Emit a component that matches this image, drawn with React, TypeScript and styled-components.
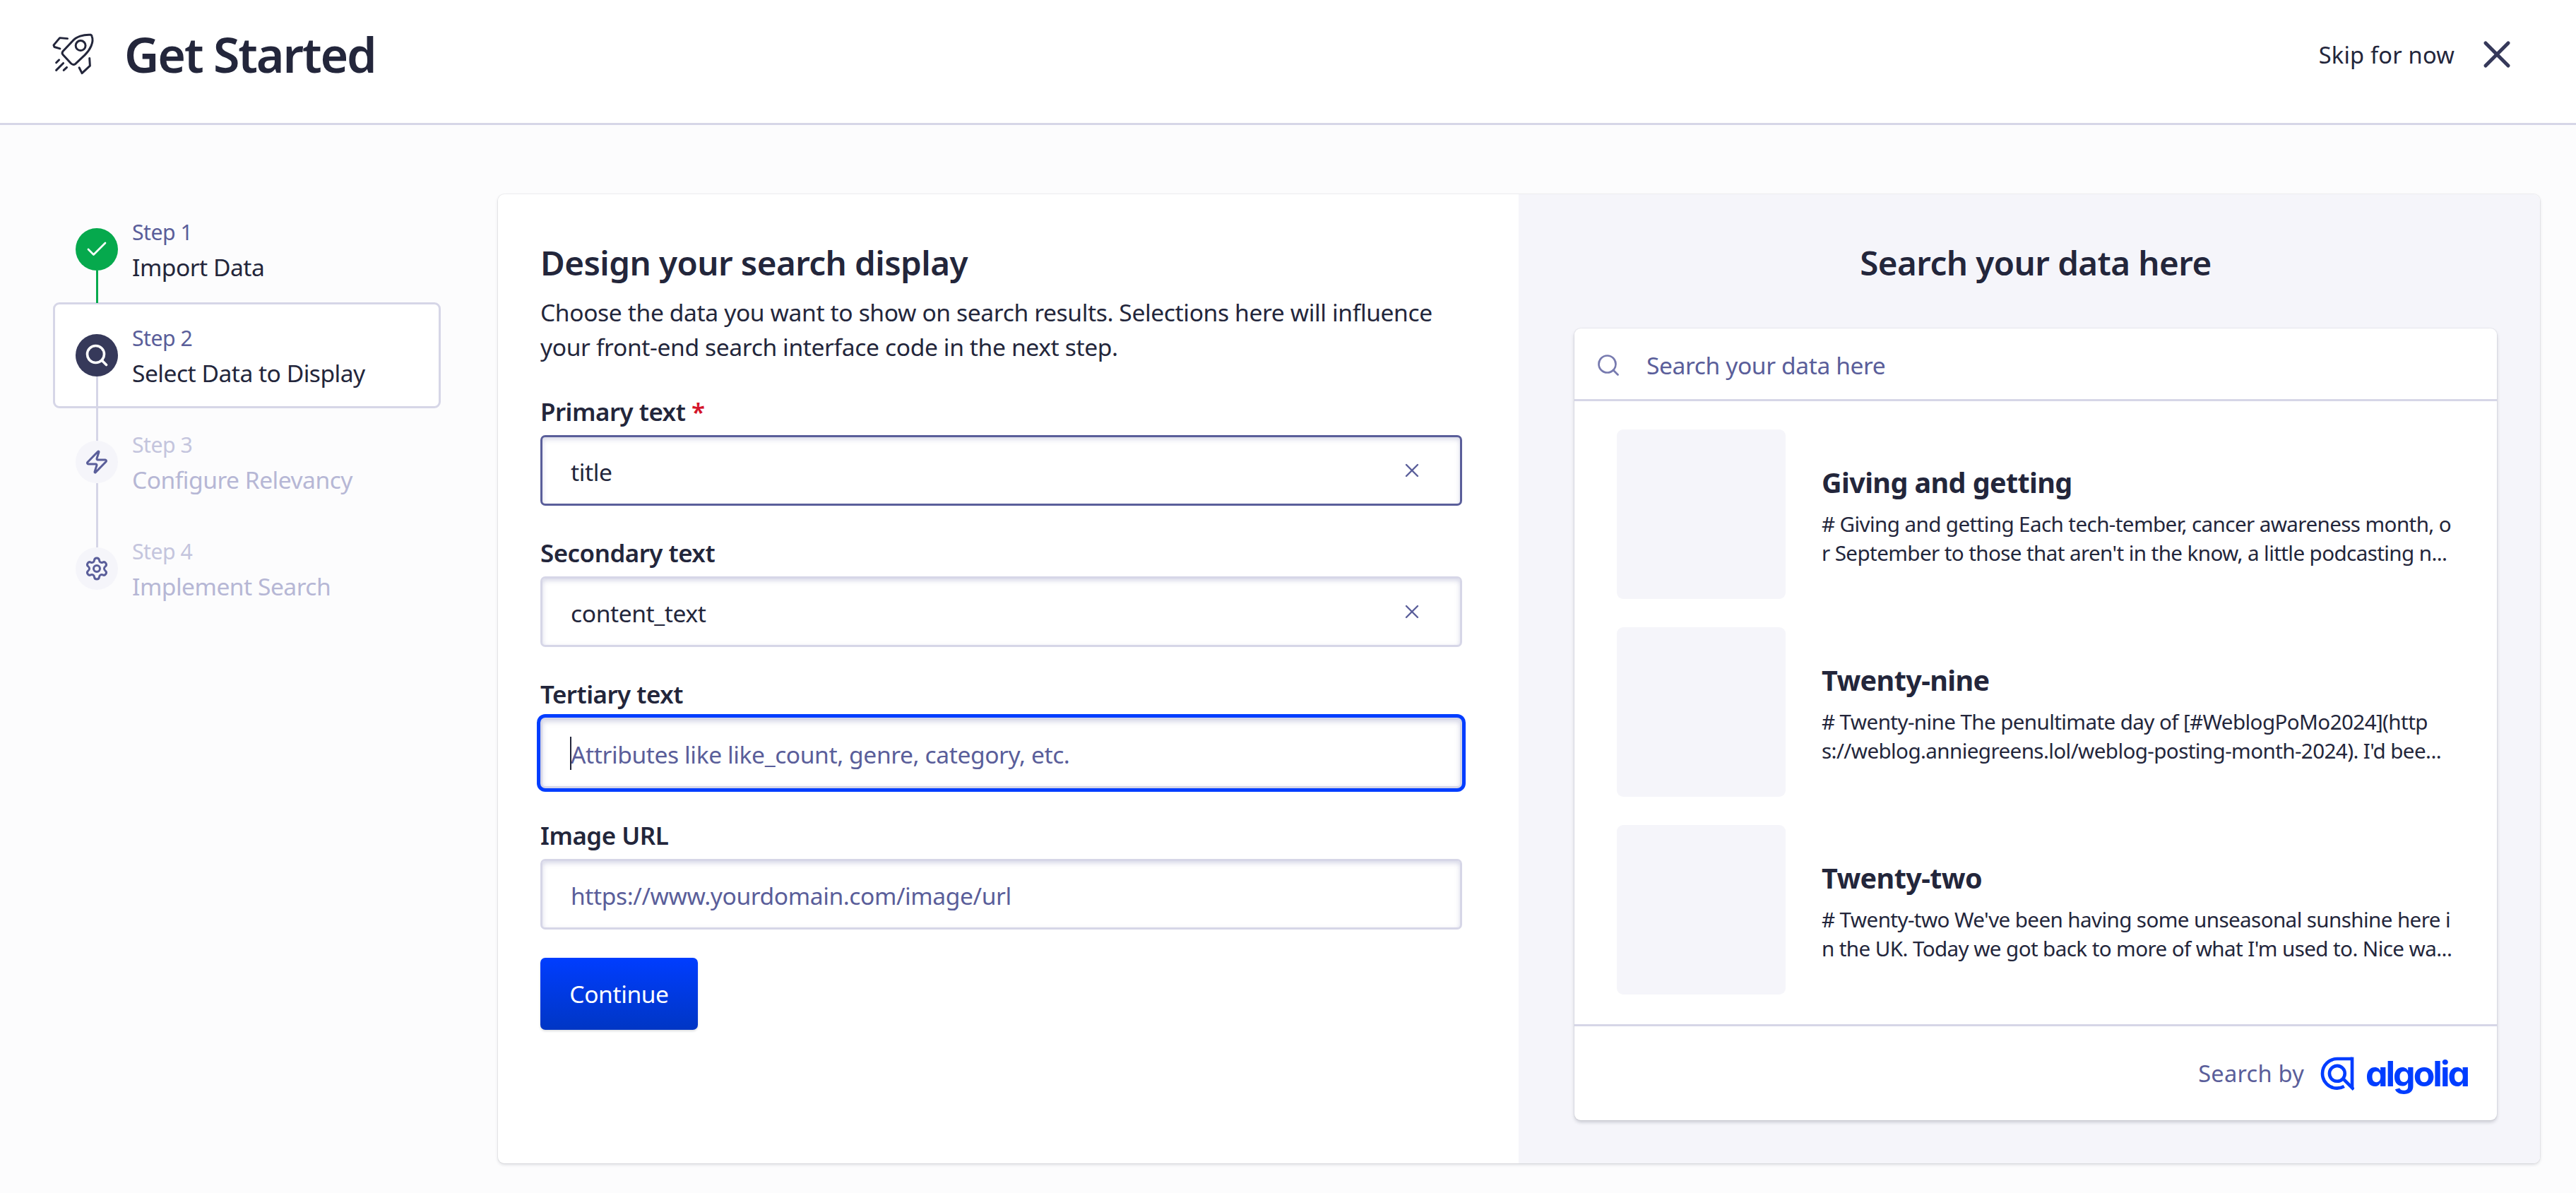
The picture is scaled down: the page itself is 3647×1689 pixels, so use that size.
import React from "react";
import styled, { createGlobalStyle } from "styled-components";
import { Check, Search, Zap, Settings, X } from "lucide-react";

const GlobalStyle = createGlobalStyle`
  html, body {
    margin: 0;
    padding: 0;
    background: #fcfcfd;
    color: #23263b;
    font-family: "Noto Sans", "Open Sans", sans-serif;
  }
  * { box-sizing: border-box; }
`;

const Page = styled.div`
  width: 3647px;
  height: 1689px;
  overflow: hidden;
  display: flex;
  flex-direction: column;
`;

const Header = styled.header`
  height: 177px;
  flex: none;
  background: #fff;
  border-bottom: 3px solid #d6d6e7;
  display: flex;
  align-items: center;
  justify-content: space-between;
  padding: 0 80px 20px 73px;
`;

const Brand = styled.div`
  display: flex;
  align-items: center;
  gap: 40px;
`;

const Title = styled.h1`
  margin: 0;
  font-size: 68px;
  line-height: 80px;
  font-weight: 600;
  letter-spacing: -2.1px;
`;

const Skip = styled.div`
  display: flex;
  align-items: center;
  gap: 28px;
  font-size: 32.6px;
  letter-spacing: 0.2px;
`;

const Body = styled.div`
  flex: 1;
  display: flex;
  padding: 98px 51px 42px 75px;
  gap: 81px;
`;

const Sidebar = styled.nav`
  width: 549px;
  flex: none;
  display: flex;
  flex-direction: column;
  padding-top: 2px;
`;

const Step = styled.div<{ $active?: boolean }>`
  height: ${(p) => (p.$active ? 150 : 151)}px;
  display: flex;
  align-items: center;
  gap: 20px;
  padding-left: ${(p) => (p.$active ? 29 : 32)}px;
  border: ${(p) => (p.$active ? "3px solid #d6d6e7" : "none")};
  border-radius: 9px;
  background: ${(p) => (p.$active ? "#fff" : "transparent")};
`;

const StepCircle = styled.div<{ $bg: string; $fg: string; $line?: number; $lineColor?: string }>`
  width: 60px;
  height: 60px;
  flex: none;
  border-radius: 50%;
  background: ${(p) => p.$bg};
  color: ${(p) => p.$fg};
  display: flex;
  align-items: center;
  justify-content: center;
  position: relative;
  &::after {
    content: "";
    display: ${(p) => (p.$line ? "block" : "none")};
    position: absolute;
    top: 60px;
    left: 29px;
    width: 3px;
    height: ${(p) => p.$line}px;
    background: ${(p) => p.$lineColor};
  }
`;

const StepText = styled.div<{ $muted?: boolean }>`
  display: flex;
  flex-direction: column;
  padding-top: 2px;
  color: ${(p) => (p.$muted ? "#b6b7d5" : "#23263b")};
`;

const StepLabel = styled.span<{ $muted?: boolean }>`
  font-size: 30.2px;
  line-height: 48px;
  letter-spacing: -0.5px;
  color: ${(p) => (p.$muted ? "#c4c5dd" : "#5a5e9a")};
`;

const StepName = styled.span`
  font-size: 33.6px;
  line-height: 50px;
  letter-spacing: -0.5px;
`;

const Card = styled.main`
  flex: 1;
  display: flex;
  background: #fff;
  border-radius: 9px;
  box-shadow: 0 0 0 1px rgba(35, 38, 59, 0.05), 0 2px 4px rgba(35, 38, 59, 0.15);
  overflow: hidden;
`;

const FormPane = styled.section`
  width: 1445px;
  flex: none;
  padding: 65px 80px 0 60px;
`;

const FormTitle = styled.h2`
  margin: 0;
  font-size: 47.5px;
  line-height: 64px;
  font-weight: 600;
  letter-spacing: -0.55px;
`;

const FormHint = styled.p`
  margin: 14px 0 0;
  font-size: 33.6px;
  line-height: 49px;
  letter-spacing: -0.37px;
`;

const Field = styled.div`
  margin-top: 42px;
`;

const FieldLabel = styled.label`
  display: block;
  font-size: 34.9px;
  line-height: 50px;
  font-weight: 600;
  letter-spacing: -0.5px;
  margin-bottom: 8px;
`;

const Required = styled.span`
  color: #d4142a;
`;

const InputWrap = styled.div`
  position: relative;
`;

const TextInput = styled.input<{ $state?: "selected" | "focus" }>`
  display: block;
  width: 100%;
  height: 100px;
  padding: 3px 100px 0 40px;
  border: 3px solid ${(p) => (p.$state === "selected" ? "#5a5e9a" : "#d6d6e7")};
  border-radius: 7px;
  background: #fff;
  font-family: inherit;
  font-size: 33.6px;
  letter-spacing: -0.4px;
  color: #23263b;
  outline: none;
  box-shadow: inset 0 3px 7px rgba(119, 122, 175, 0.3)
    ${(p) => (p.$state === "focus" ? ", 0 0 0 5px #003dff" : "")};
  &::placeholder {
    color: #5a5e9a;
    opacity: 1;
  }
`;

const ClearIcon = styled(X)`
  position: absolute;
  right: 55px;
  top: 34px;
  color: #5a5e9a;
`;

const Caret = styled.span`
  position: absolute;
  left: 42px;
  top: 27px;
  width: 2px;
  height: 47px;
  background: #23263b;
`;

const ContinueButton = styled.button`
  display: block;
  margin-top: 40px;
  width: 223px;
  height: 102px;
  border: none;
  border-radius: 7px;
  background: linear-gradient(#003dff, #0036c4);
  box-shadow: 0 2px 3px rgba(35, 38, 59, 0.15);
  color: #fff;
  font-family: inherit;
  font-size: 33.6px;
  letter-spacing: -0.4px;
`;

const PreviewPane = styled.section`
  flex: 1;
  background: #f5f5fa;
  padding: 65px 61px 0 79px;
`;

const PreviewTitle = styled.h2`
  margin: 0 0 61px;
  text-align: center;
  font-size: 47.5px;
  line-height: 64px;
  font-weight: 600;
  letter-spacing: -0.55px;
`;

const ResultCard = styled.div`
  height: 1121px;
  background: #fff;
  border-radius: 9px;
  box-shadow: 0 0 0 1px rgba(35, 38, 59, 0.05), 0 3px 5px rgba(35, 38, 59, 0.2);
  display: flex;
  flex-direction: column;
`;

const SearchRow = styled.div`
  height: 103px;
  flex: none;
  display: flex;
  align-items: center;
  gap: 36px;
  padding: 3px 0 0 30px;
  border-bottom: 3px solid #d6d6e7;
  color: #5a5e9a;
  font-size: 33.6px;
  letter-spacing: -0.4px;
`;

const Results = styled.div`
  flex: 1;
  display: flex;
  flex-direction: column;
  gap: 40px;
  padding: 40px 0 0 60px;
`;

const Result = styled.article`
  display: flex;
  align-items: center;
  gap: 51px;
`;

const Thumb = styled.div`
  width: 239px;
  height: 240px;
  flex: none;
  border-radius: 9px;
  background: #f5f5fa;
`;

const ResultBody = styled.div`
  padding-top: 4px;
`;

const ResultTitle = styled.h3`
  margin: 0 0 12px;
  font-size: 39.5px;
  line-height: 54px;
  font-weight: 700;
  letter-spacing: -0.6px;
`;

const ResultLine = styled.div`
  font-size: 29.6px;
  line-height: 40.7px;
  letter-spacing: -0.6px;
  white-space: nowrap;
`;

const Footer = styled.footer`
  height: 136px;
  flex: none;
  border-top: 3px solid #d6d6e7;
  display: flex;
  align-items: center;
  justify-content: flex-end;
  padding-right: 41px;
  gap: 23px;
  color: #5a5e9a;
  font-size: 32.6px;
  letter-spacing: 0.25px;
`;

const AlgoliaLogo = styled.div`
  display: flex;
  align-items: center;
  gap: 16px;
  color: #003dff;
`;

const AlgoliaWord = styled.span`
  font-family: "Inter", sans-serif;
  font-feature-settings: "cv11";
  font-size: 50px;
  line-height: 48px;
  font-weight: 700;
  letter-spacing: -3px;
`;

const RocketIcon = () => (
  <svg width="63" height="62" viewBox="100 75 190 185" fill="none" stroke="#23263b" strokeWidth="9" strokeLinecap="round" strokeLinejoin="round">
    <path d="M268 84C235 82 205 92 190 110L148 155Q143 162 148 168L183 206Q192 215 202 208L242 170C265 148 282 115 272 90Q271 85 268 84Z" />
    <circle cx="224" cy="130" r="21" />
    <path d="M168 100L135 97L109 128L112 136L136 143" />
    <path d="M262 184L264 216L230 248L218 224" />
    <path d="M120 203L132 191M120 235L150 205M152 235L165 223" />
  </svg>
);

const AlgoliaMark = () => (
  <svg width="48" height="48" viewBox="560 100 145 145" fill="none" stroke="currentColor" strokeWidth="14">
    <path d="M696 109H632A63 63 0 1 0 632 235Q648 235 662 227" />
    <circle cx="632" cy="172" r="33" />
    <path d="M696 102V230" />
    <path d="M655 192L703 240" />
  </svg>
);

const results = [
  {
    title: "Giving and getting",
    lines: [
      "# Giving and getting Each tech-tember, cancer awareness month, o",
      "r September to those that aren't in the know, a little podcasting n...",
    ],
  },
  {
    title: "Twenty-nine",
    lines: [
      "# Twenty-nine The penultimate day of [#WeblogPoMo2024](http",
      "s://weblog.anniegreens.lol/weblog-posting-month-2024). I'd bee...",
    ],
  },
  {
    title: "Twenty-two",
    lines: [
      "# Twenty-two We've been having some unseasonal sunshine here i",
      "n the UK. Today we got back to more of what I'm used to. Nice wa...",
    ],
  },
];

const App: React.FC = () => {
  return (
    <Page>
      <GlobalStyle />
      <Header>
        <Brand>
          <RocketIcon />
          <Title>Get Started</Title>
        </Brand>
        <Skip>
          <span>Skip for now</span>
          <X size={64} strokeWidth={1.9} color="#36395a" />
        </Skip>
      </Header>
      <Body>
        <Sidebar>
          <Step>
            <StepCircle $bg="#06a94d" $fg="#fff" $line={46} $lineColor="#06a94d">
              <Check size={36} strokeWidth={1.8} />
            </StepCircle>
            <StepText>
              <StepLabel>Step 1</StepLabel>
              <StepName>Import Data</StepName>
            </StepText>
          </Step>
          <Step $active>
            <StepCircle $bg="#36395a" $fg="#fff" $line={92} $lineColor="#d6d6e7">
              <Search size={36} strokeWidth={2.4} />
            </StepCircle>
            <StepText>
              <StepLabel>Step 2</StepLabel>
              <StepName>Select Data to Display</StepName>
            </StepText>
          </Step>
          <Step>
            <StepCircle $bg="#f5f5fa" $fg="#5a5e9a" $line={91} $lineColor="#d6d6e7">
              <Zap size={36} strokeWidth={2} />
            </StepCircle>
            <StepText $muted>
              <StepLabel $muted>Step 3</StepLabel>
              <StepName>Configure Relevancy</StepName>
            </StepText>
          </Step>
          <Step>
            <StepCircle $bg="#f5f5fa" $fg="#5a5e9a">
              <Settings size={36} strokeWidth={2} />
            </StepCircle>
            <StepText $muted>
              <StepLabel $muted>Step 4</StepLabel>
              <StepName>Implement Search</StepName>
            </StepText>
          </Step>
        </Sidebar>
        <Card>
          <FormPane>
            <FormTitle>Design your search display</FormTitle>
            <FormHint>
              Choose the data you want to show on search results. Selections here will influence
              <br />
              your front-end search interface code in the next step.
            </FormHint>
            <Field>
              <FieldLabel>
                Primary text <Required>*</Required>
              </FieldLabel>
              <InputWrap>
                <TextInput $state="selected" value="title" readOnly />
                <ClearIcon size={32} strokeWidth={1.8} />
              </InputWrap>
            </Field>
            <Field>
              <FieldLabel>Secondary text</FieldLabel>
              <InputWrap>
                <TextInput value="content_text" readOnly />
                <ClearIcon size={32} strokeWidth={1.8} />
              </InputWrap>
            </Field>
            <Field>
              <FieldLabel>Tertiary text</FieldLabel>
              <InputWrap>
                <TextInput $state="focus" placeholder="Attributes like like_count, genre, category, etc." readOnly />
                <Caret />
              </InputWrap>
            </Field>
            <Field>
              <FieldLabel>Image URL</FieldLabel>
              <InputWrap>
                <TextInput placeholder="https://www.yourdomain.com/image/url" readOnly />
              </InputWrap>
            </Field>
            <ContinueButton>Continue</ContinueButton>
          </FormPane>
          <PreviewPane>
            <PreviewTitle>Search your data here</PreviewTitle>
            <ResultCard>
              <SearchRow>
                <Search size={36} strokeWidth={1.8} color="#777aaf" />
                <span>Search your data here</span>
              </SearchRow>
              <Results>
                {results.map((r) => (
                  <Result key={r.title}>
                    <Thumb />
                    <ResultBody>
                      <ResultTitle>{r.title}</ResultTitle>
                      {r.lines.map((l) => (
                        <ResultLine key={l}>{l}</ResultLine>
                      ))}
                    </ResultBody>
                  </Result>
                ))}
              </Results>
              <Footer>
                <span>Search by</span>
                <AlgoliaLogo>
                  <AlgoliaMark />
                  <AlgoliaWord>algolia</AlgoliaWord>
                </AlgoliaLogo>
              </Footer>
            </ResultCard>
          </PreviewPane>
        </Card>
      </Body>
    </Page>
  );
};

export default App;
